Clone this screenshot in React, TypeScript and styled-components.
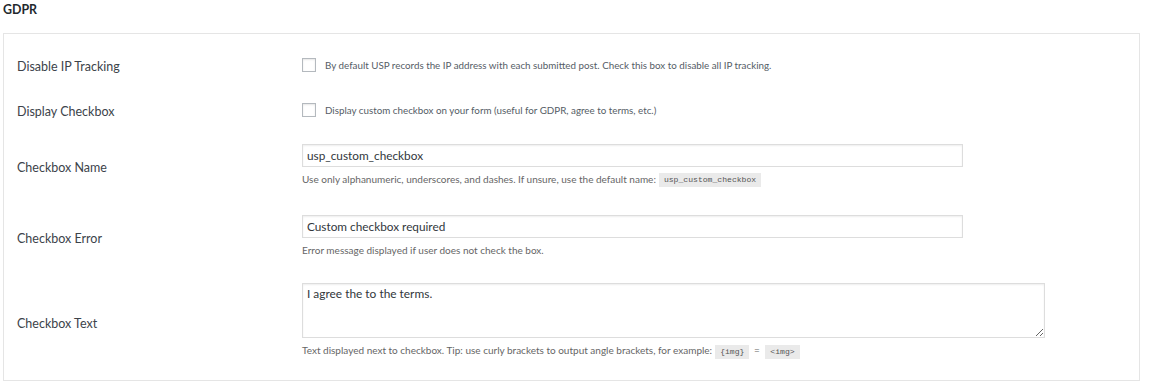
import React from "react";
import styled, { createGlobalStyle } from "styled-components";

const GlobalStyle = createGlobalStyle`
  html, body { margin: 0; padding: 0; background: #ffffff; }
  body { font-family: Lato, "Open Sans", sans-serif; color: #23282d; }
`;

const Page = styled.div`
  padding: 0 9px 0 3px;
`;

const Title = styled.h2`
  margin: 0 0 13px;
  font-family: Lato, sans-serif;
  font-size: 12.4px;
  font-weight: 700;
  line-height: 20px;
  color: #23282d;
`;

const Panel = styled.section`
  border: 1px solid #e5e5e5;
  background: #fff;
  padding: 8px 0 8px;
`;

const Row = styled.div<{ $top: number }>`
  display: grid;
  grid-template-columns: 298px 1fr;
  align-items: center;
  padding: ${(p) => p.$top}px 0 13px;
`;

const Label = styled.label`
  padding: 5px 0 0 13px;
  font-size: 12.5px;
  line-height: 18px;
  color: #3c434a;
`;

const Field = styled.div`
  display: flex;
  flex-direction: column;
  align-items: flex-start;
`;

const CheckLine = styled.div`
  display: flex;
  align-items: center;
  gap: 9px;
  height: 18px;
`;

const Check = styled.input.attrs({ type: "checkbox" })`
  appearance: none;
  margin: 0;
  width: 14px;
  height: 14px;
  border: 1px solid #b4b9be;
  background: #fff;
  box-shadow: inset 0 1px 2px rgba(0, 0, 0, 0.1);
  box-sizing: border-box;
`;

const Hint = styled.span`
  font-size: 9.8px;
  color: #555d66;
`;

const TextInput = styled.input.attrs({ type: "text" })`
  box-sizing: border-box;
  width: 661px;
  height: 23px;
  margin: 0;
  padding: 0 4px;
  border: 1px solid #dddddd;
  box-shadow: inset 0 1px 2px rgba(0, 0, 0, 0.07);
  font-family: Lato, sans-serif;
  font-size: 11.8px;
  color: #32373c;
  outline: none;
`;

const TextArea = styled.textarea`
  box-sizing: border-box;
  width: 743px;
  height: 55px;
  margin: 0;
  padding: 2px 4px;
  border: 1px solid #dddddd;
  box-shadow: inset 0 1px 2px rgba(0, 0, 0, 0.07);
  font-family: Lato, sans-serif;
  font-size: 11.9px;
  line-height: 16px;
  color: #32373c;
  outline: none;
  display: block;
`;

const Description = styled.p`
  margin: 5px 0 0;
  font-size: 10px;
  line-height: 15px;
  color: #666;
`;

const Code = styled.code`
  display: inline-block;
  margin: 0 2px 0 3px;
  padding: 0 5px;
  line-height: 14px;
  background: #eaeaea;
  font-family: "Liberation Mono", monospace;
  font-size: 8.1px;
  color: #555;
  vertical-align: middle;
`;

export default function App() {
  return (
    <Page>
      <GlobalStyle />
      <Title>GDPR</Title>
      <Panel>
        <Row $top={11}>
          <Label>Disable IP Tracking</Label>
          <Field>
            <CheckLine>
              <Check />
              <Hint>
                By default USP records the IP address with each submitted post. Check this box to disable all IP tracking.
              </Hint>
            </CheckLine>
          </Field>
        </Row>
        <Row $top={9}>
          <Label>Display Checkbox</Label>
          <Field>
            <CheckLine>
              <Check />
              <Hint>Display custom checkbox on your form (useful for GDPR, agree to terms, etc.)</Hint>
            </CheckLine>
          </Field>
        </Row>
        <Row $top={10}>
          <Label>Checkbox Name</Label>
          <Field>
            <TextInput defaultValue="usp_custom_checkbox" />
            <Description>
              Use only alphanumeric, underscores, and dashes. If unsure, use the default name:
              <Code>usp_custom_checkbox</Code>
            </Description>
          </Field>
        </Row>
        <Row $top={15}>
          <Label>Checkbox Error</Label>
          <Field>
            <TextInput defaultValue="Custom checkbox required" />
            <Description>Error message displayed if user does not check the box.</Description>
          </Field>
        </Row>
        <Row $top={12}>
          <Label>Checkbox Text</Label>
          <Field>
            <TextArea defaultValue="I agree the to the terms." />
            <Description>
              Text displayed next to checkbox. Tip: use curly brackets to output angle brackets, for example:
              <Code>{"{img}"}</Code> = <Code>{"<img>"}</Code>
            </Description>
          </Field>
        </Row>
      </Panel>
    </Page>
  );
}
